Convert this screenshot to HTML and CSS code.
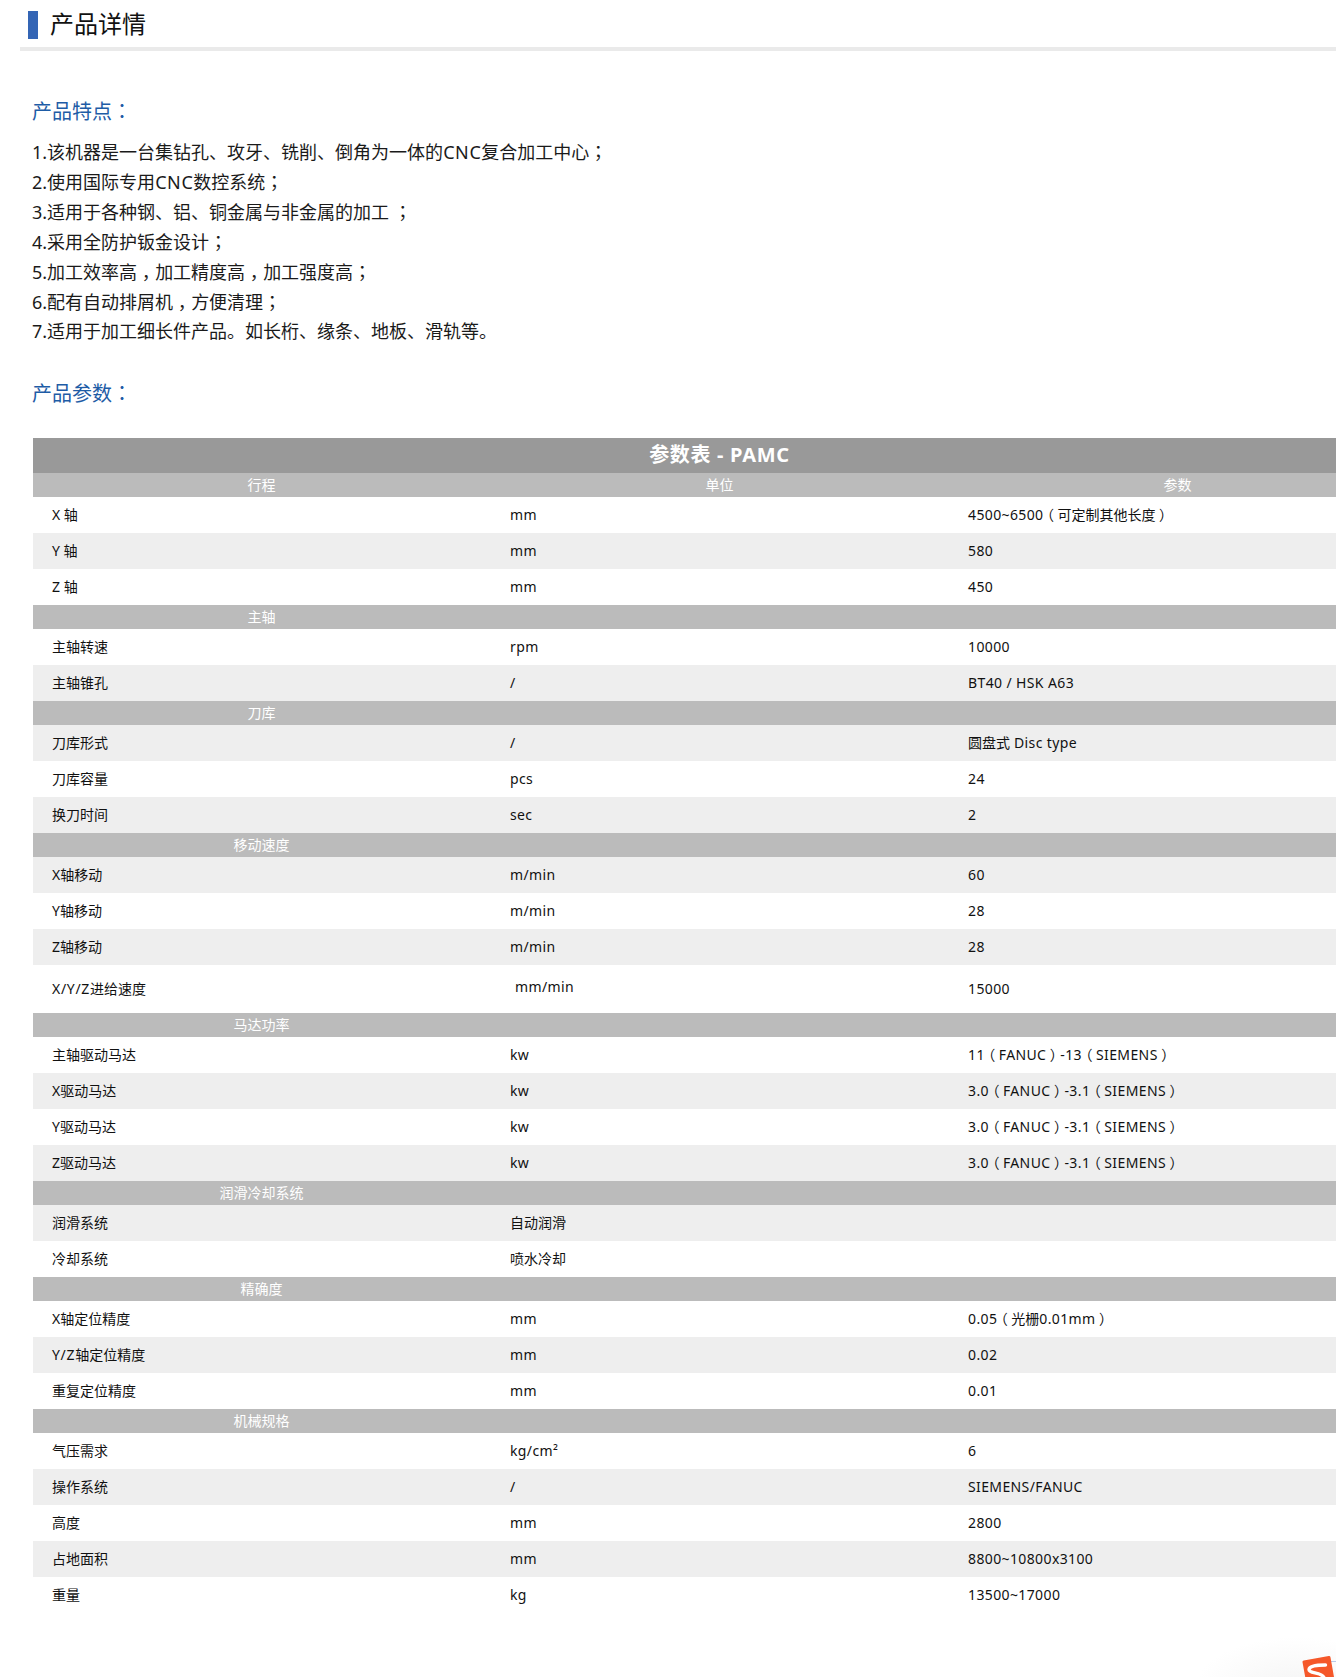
FILE: index.html
```html
<!DOCTYPE html>
<html lang="zh-CN">
<head>
<meta charset="utf-8">
<title>产品详情</title>
<link rel="stylesheet" href="styles.css">
</head>
<body>
<div class="page">
  <header class="detail-head">
    <span class="head-mark"></span>
    <h1 class="head-title">产品详情</h1>
  </header>
  <main class="detail-body">
    <h2 class="sub-title first">产品特点<span class="pt" lang="zh-TW">：</span></h2>
    <ul class="features">
      <li>1.该机器是一台集钻孔、攻牙、铣削、倒角为一体的<span class="cnc">CNC</span>复合加工中心<span class="pt" lang="zh-TW">；</span></li>
      <li>2.使用国际专用<span class="cnc">CNC</span>数控系统<span class="pt" lang="zh-TW">；</span></li>
      <li>3.适用于各种钢、铝、铜金属与非金属的加工 <span class="pt" lang="zh-TW">；</span></li>
      <li>4.采用全防护钣金设计<span class="pt" lang="zh-TW">；</span></li>
      <li>5.加工效率高<span class="cm">，</span>加工精度高<span class="cm">，</span>加工强度高<span class="pt" lang="zh-TW">；</span></li>
      <li>6.配有自动排屑机<span class="cm">，</span>方便清理<span class="pt" lang="zh-TW">；</span></li>
      <li>7.适用于加工细长件产品。如长桁、缘条、地板、滑轨等。</li>
    </ul>
    <h2 class="sub-title second">产品参数<span class="pt" lang="zh-TW">：</span></h2>
    <table class="spec">
      <colgroup><col class="c"><col class="c"><col class="c"></colgroup>
      <tbody>
        <tr class="t-row"><th colspan="3">参数表 - PAMC</th></tr>
        <tr class="s-row"><th>行程</th><th>单位</th><th>参数</th></tr>
        <tr><td>X 轴</td><td>mm</td><td>4500~6500<span class="par">（</span><span class="zh">可定制其他长度</span><span class="par">）</span></td></tr>
        <tr><td>Y 轴</td><td>mm</td><td>580</td></tr>
        <tr><td>Z 轴</td><td>mm</td><td>450</td></tr>
        <tr class="s-row"><th>主轴</th><th></th><th></th></tr>
        <tr><td>主轴转速</td><td>rpm</td><td>10000</td></tr>
        <tr><td>主轴锥孔</td><td>/</td><td>BT40 / HSK A63</td></tr>
        <tr class="s-row"><th>刀库</th><th></th><th></th></tr>
        <tr><td>刀库形式</td><td>/</td><td><span class="zh">圆盘式</span> Disc type</td></tr>
        <tr><td>刀库容量</td><td>pcs</td><td>24</td></tr>
        <tr><td>换刀时间</td><td>sec</td><td>2</td></tr>
        <tr class="s-row"><th>移动速度</th><th></th><th></th></tr>
        <tr><td>X轴移动</td><td>m/min</td><td>60</td></tr>
        <tr><td>Y轴移动</td><td>m/min</td><td>28</td></tr>
        <tr><td>Z轴移动</td><td>m/min</td><td>28</td></tr>
        <tr class="tall"><td><span class="lat">X/Y/Z</span>进给速度</td><td><span class="raised">mm/min</span></td><td>15000</td></tr>
        <tr class="s-row"><th>马达功率</th><th></th><th></th></tr>
        <tr><td>主轴驱动马达</td><td>kw</td><td>11<span class="par">（</span>FANUC<span class="par">）</span>-13<span class="par">（</span>SIEMENS<span class="par">）</span></td></tr>
        <tr><td>X驱动马达</td><td>kw</td><td>3.0<span class="par">（</span>FANUC<span class="par">）</span>-3.1<span class="par">（</span>SIEMENS<span class="par">）</span></td></tr>
        <tr><td>Y驱动马达</td><td>kw</td><td>3.0<span class="par">（</span>FANUC<span class="par">）</span>-3.1<span class="par">（</span>SIEMENS<span class="par">）</span></td></tr>
        <tr><td>Z驱动马达</td><td>kw</td><td>3.0<span class="par">（</span>FANUC<span class="par">）</span>-3.1<span class="par">（</span>SIEMENS<span class="par">）</span></td></tr>
        <tr class="s-row"><th>润滑冷却系统</th><th></th><th></th></tr>
        <tr><td>润滑系统</td><td><span class="zh">自动润滑</span></td><td></td></tr>
        <tr><td>冷却系统</td><td><span class="zh">喷水冷却</span></td><td></td></tr>
        <tr class="s-row"><th>精确度</th><th></th><th></th></tr>
        <tr><td>X轴定位精度</td><td>mm</td><td>0.05<span class="par">（</span><span class="zh">光栅</span>0.01mm<span class="par">）</span></td></tr>
        <tr><td><span class="lat">Y/Z</span>轴定位精度</td><td>mm</td><td>0.02</td></tr>
        <tr><td>重复定位精度</td><td>mm</td><td>0.01</td></tr>
        <tr class="s-row"><th>机械规格</th><th></th><th></th></tr>
        <tr><td>气压需求</td><td>kg/cm²</td><td>6</td></tr>
        <tr><td>操作系统</td><td>/</td><td>SIEMENS/FANUC</td></tr>
        <tr><td>高度</td><td>mm</td><td>2800</td></tr>
        <tr><td>占地面积</td><td>mm</td><td>8800~10800x3100</td></tr>
        <tr><td>重量</td><td>kg</td><td>13500~17000</td></tr>
      </tbody>
    </table>
  </main>
  <div class="ime-glow"></div>
  <svg class="ime-logo" width="36" height="23" viewBox="0 0 36 23" aria-hidden="true">
    <line x1="31" y1="7.5" x2="36" y2="7.5" stroke="#b9c9e8" stroke-width="1"/>
    <path d="M4 8 L29 3.5 L33 26 L8 30 Z" fill="#f5582a" stroke="#f5582a" stroke-width="3" stroke-linejoin="round"/>
    <path d="M25.5 11 C19 11 9.5 11.5 9 15.5 C9 20 21 17.5 24 23.5" fill="none" stroke="#fff" stroke-width="3.4" stroke-linecap="round"/>
  </svg>
</div>
</body>
</html>
```

FILE: styles.css
```css
html, body {
  margin: 0;
  padding: 0;
  background: #fff;
}

body {
  overflow: hidden;
  color: #111;
  font-family: "Noto Sans", "Noto Sans CJK SC", sans-serif;
}

.page {
  position: relative;
  width: 1336px;
  height: 1677px;
  overflow: hidden;
}

.detail-head {
  display: flex;
  align-items: flex-start;
  gap: 12px;
  height: 51px;
  margin-left: 20px;
  padding: 11px 0 0 8px;
  box-sizing: border-box;
  border-bottom: 4px solid #eaeaea;
}

.head-mark {
  flex: none;
  width: 10px;
  height: 28px;
  background: #3465b5;
}

.head-title {
  margin: 0;
  font-size: 24px;
  font-weight: 400;
  line-height: 26px;
  color: #111;
}

.detail-body {
  padding: 45px 0 0 32px;
}

.sub-title {
  height: 30px;
  margin: 0;
  font-size: 20px;
  font-weight: 400;
  line-height: 30px;
  color: #1e5ca6;
}

.features {
  margin: 10px 0 32px;
  padding: 0;
  list-style: none;
  font-size: 18px;
  line-height: 30px;
  color: #1a1a1a;
  white-space: nowrap;
}

.features li {
  height: 30px;
}

.cnc {
  letter-spacing: 0.6px;
}

.pt {
  font-family: "Noto Sans CJK TC", sans-serif;
}

.cm {
  padding: 0 4.5px;
  font-feature-settings: "halt";
}

.spec {
  margin: 30px 0 0 1px;
  width: 1374px;
  table-layout: fixed;
  border-collapse: collapse;
  font-size: 14px;
}

.spec .c {
  width: 458px;
}

.spec td {
  height: 36px;
  padding: 0 20px 0 19px;
  line-height: 20px;
  vertical-align: middle;
  color: #111;
}

.spec td + td {
  letter-spacing: 0.38px;
}

.spec tr:nth-child(even) td {
  background: #eee;
}

.spec .tall td {
  height: 48px;
}

.spec .raised {
  display: inline-block;
  padding: 0 0 4px 5px;
}

.spec .zh,
.spec .par {
  letter-spacing: 0;
}

.spec .lat {
  letter-spacing: 0.7px;
}

.spec .par {
  padding: 0 3.5px;
  font-feature-settings: "halt";
}

.t-row th {
  height: 33px;
  padding: 0 1px 2px 0;
  background: #999;
  color: #fff;
  font-size: 20px;
  font-weight: 700;
  line-height: 33px;
  letter-spacing: 0.7px;
  text-align: center;
}

.s-row th {
  height: 24px;
  padding: 0 1px 0 0;
  background: #bbb;
  color: #fff;
  font-size: 14px;
  font-weight: 400;
  line-height: 24px;
  text-align: center;
}

.ime-glow {
  position: absolute;
  right: -60px;
  bottom: -60px;
  width: 200px;
  height: 100px;
  background: radial-gradient(closest-side, #f5f5f5, #fff);
}

.ime-logo {
  position: absolute;
  right: 0;
  bottom: 0;
  display: block;
}
```
